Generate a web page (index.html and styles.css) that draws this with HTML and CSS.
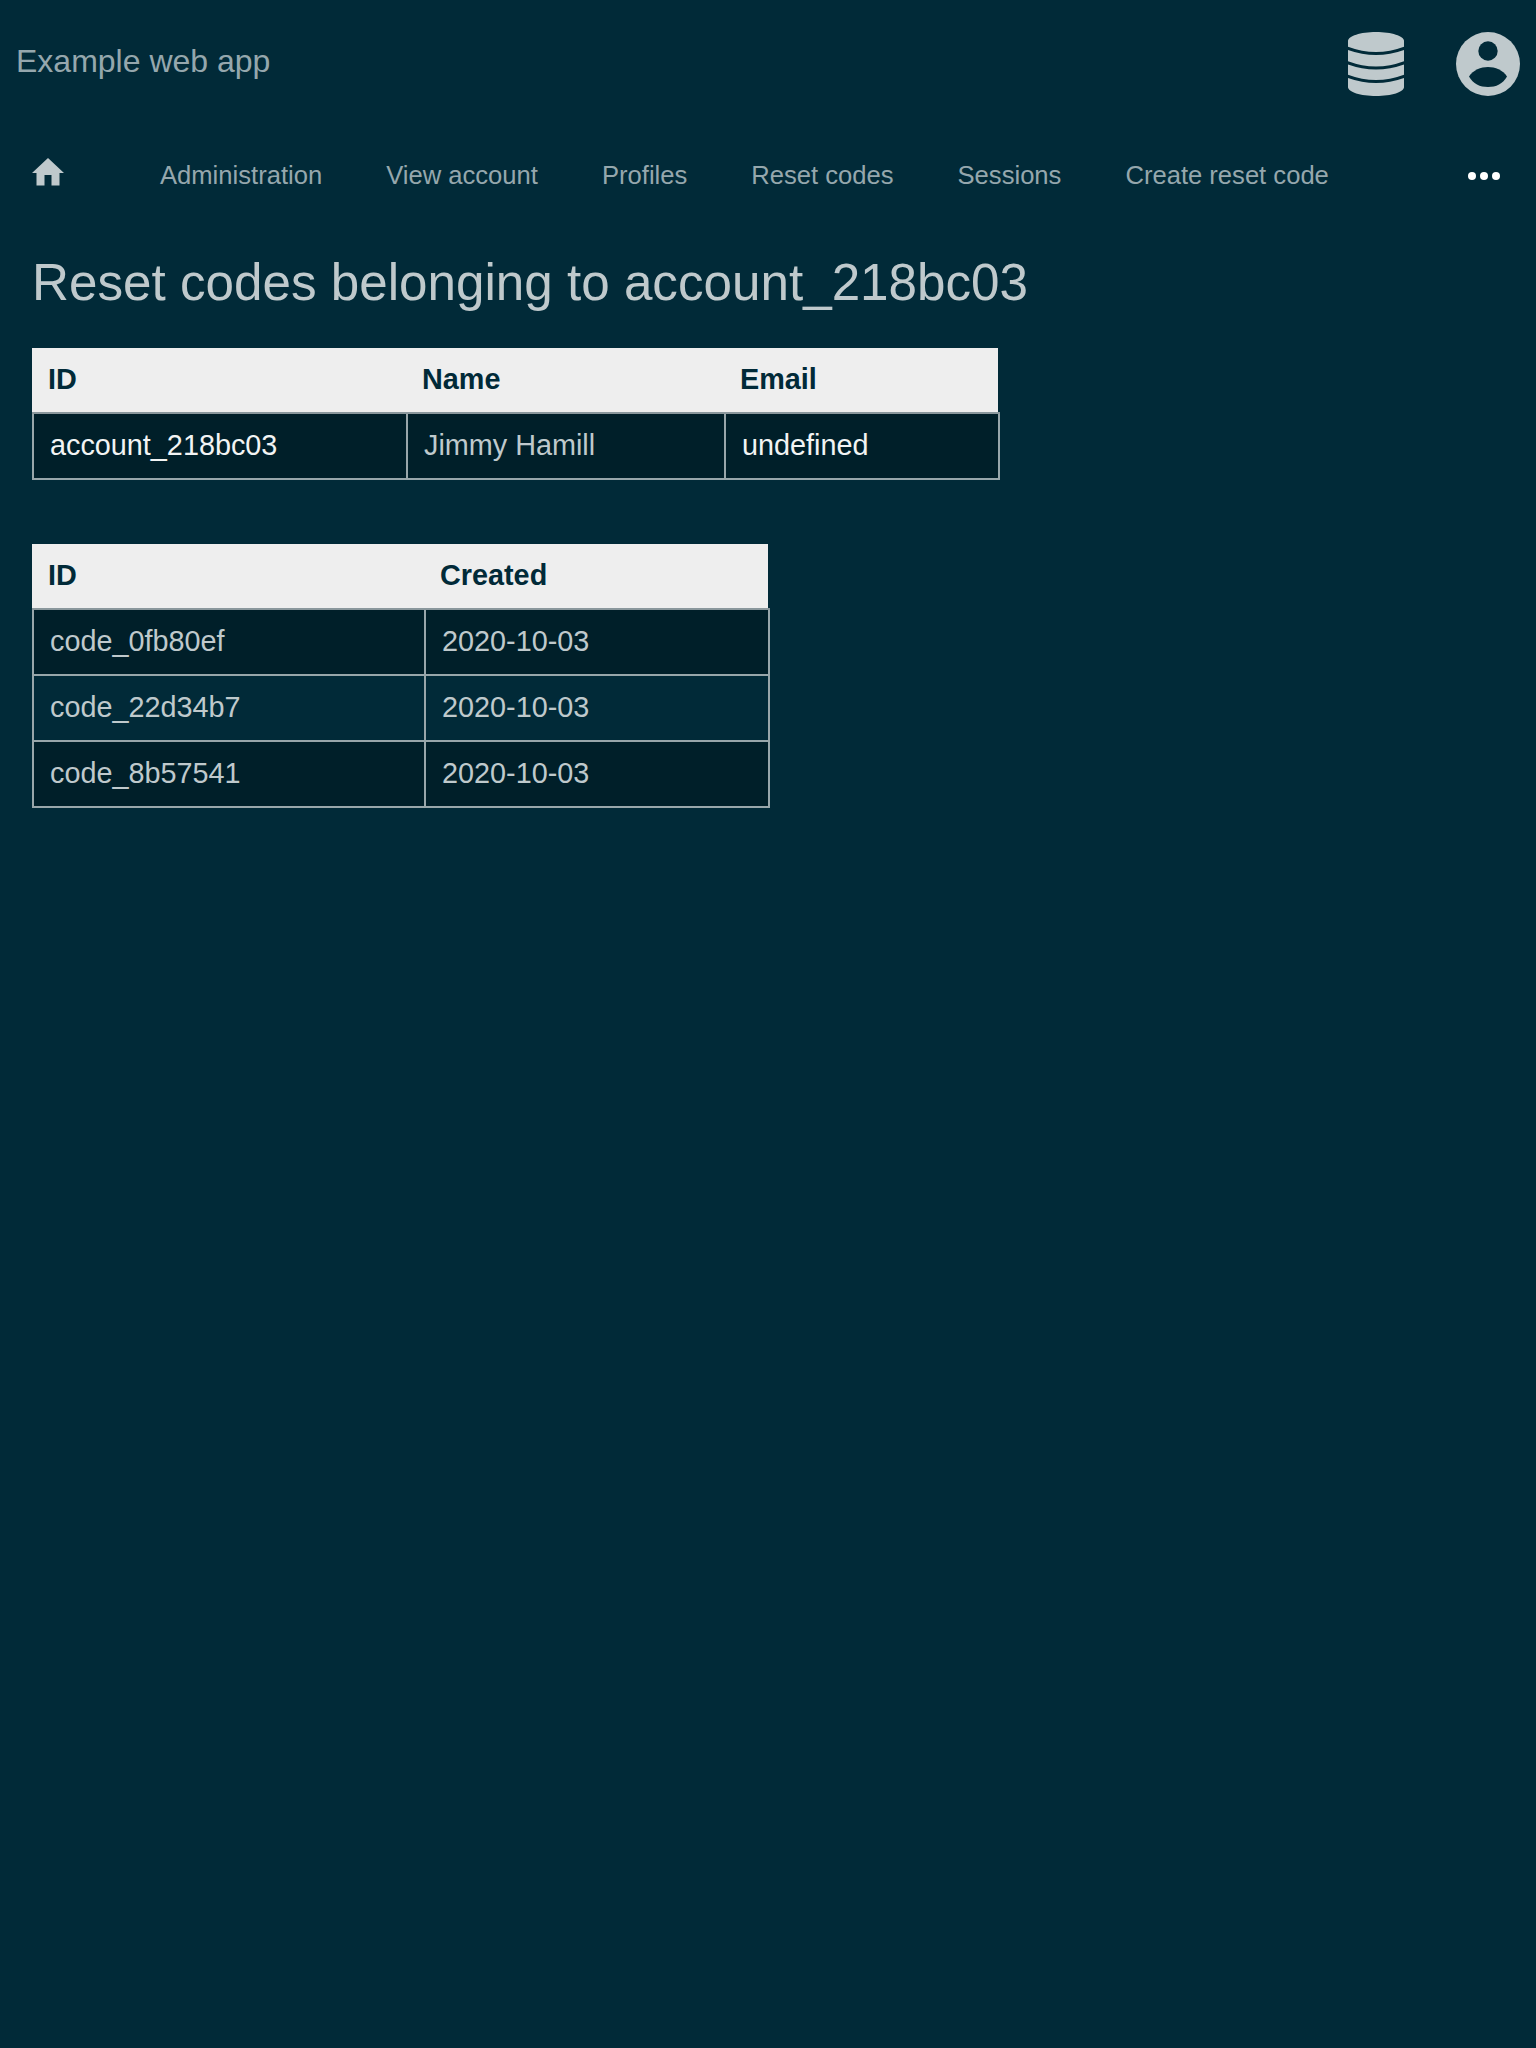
FILE: index.html
```html
<!DOCTYPE html>
<html>

<head>
    <link rel="stylesheet" href="styles.css">
</head>

<body>
    <header class="topbar">
        <div class="app-name">Example web app</div>
        <div class="top-icons">
            <svg class="icon-db" width="56" height="64" viewBox="0 0 56 64">
                <path class="fill" d="M0 9C0 4 12.5 0 28 0S56 4 56 9V55C56 60 43.5 64 28 64S0 60 0 55Z" />
                <path class="cut" d="M-1 16Q28 27 57 16M-1 30.5Q28 41.5 57 30.5M-1 44Q28 55 57 44" />
            </svg>
            <svg class="icon-user" width="64" height="64" viewBox="0 0 64 64">
                <circle class="fill" cx="32" cy="32" r="32" />
                <circle class="hole" cx="32" cy="19" r="9.7" />
                <path class="hole" d="M13 44.5C17 38 25 35 32 35S47 38 51 44.5C47 52 40 55 32 55S17 52 13 44.5Z" />
            </svg>
        </div>
    </header>

    <nav class="menu">
        <a class="home" href="#">
            <svg width="32" height="28" viewBox="0 0 32 28">
                <path class="fill" d="M16 0L32 15H27.500V27.500H19.500V17H12.500V27.500H4.500V15H0Z" />
            </svg>
        </a>
        <a href="#">Administration</a>
        <a href="#">View account</a>
        <a href="#">Profiles</a>
        <a href="#">Reset codes</a>
        <a href="#">Sessions</a>
        <a href="#">Create reset code</a>
        <span class="more"><i></i><i></i><i></i></span>
    </nav>

    <main class="content">
        <h1>Reset codes belonging to account_218bc03</h1>

        <table class="account-table">
            <tr>
                <th class="col-id">ID</th>
                <th class="col-name">Name</th>
                <th class="col-email">Email</th>
            </tr>
            <tr>
                <td class="bright">account_218bc03</td>
                <td>Jimmy Hamill</td>
                <td class="bright">undefined</td>
            </tr>
        </table>

        <table class="codes-table">
            <tr>
                <th class="col-code">ID</th>
                <th class="col-created">Created</th>
            </tr>
            <tr>
                <td>code_0fb80ef</td>
                <td>2020-10-03</td>
            </tr>
            <tr>
                <td>code_22d34b7</td>
                <td>2020-10-03</td>
            </tr>
            <tr>
                <td>code_8b57541</td>
                <td>2020-10-03</td>
            </tr>
        </table>
    </main>
</body>

</html>
```

FILE: styles.css
```css
html,
body {
    height: 100%;
}

body {
    margin: 0;
    min-height: 2048px;
    box-sizing: border-box;
    background-color: #012a38;
    color: #bfc9cc;
    font-family: "Liberation Sans", Arial, sans-serif;
}

svg {
    display: block;
}

.fill {
    fill: #bfc9cc;
}

.hole {
    fill: #012a38;
}

.cut {
    fill: none;
    stroke: #012a38;
    stroke-width: 3;
}

.topbar {
    display: flex;
    justify-content: space-between;
    align-items: flex-start;
    padding: 32px 16px 0 16px;
    height: 96px;
}

.app-name {
    font-size: 32px;
    line-height: 59px;
    color: #95a7ad;
}

.top-icons {
    display: flex;
    gap: 52px;
}

.menu {
    display: flex;
    align-items: center;
    height: 64px;
    margin-top: 16px;
    padding-left: 32px;
    font-size: 25.6px;
}

.menu a {
    color: #95a7ad;
    text-decoration: none;
    margin-right: 64px;
    padding-bottom: 2px;
}

.menu .home {
    margin-right: 96px;
    padding-bottom: 8px;
}

.more {
    display: flex;
    gap: 4px;
    margin-left: auto;
    margin-right: 36px;
}

.more i {
    display: block;
    width: 8px;
    height: 8px;
    border-radius: 50%;
    background-color: #fff;
}

.content {
    padding: 0 32px;
}

h1 {
    margin: 44px 0 34px 0;
    font-size: 51.2px;
    font-weight: normal;
    line-height: 62px;
    color: #bfc9cc;
}

table {
    border-collapse: collapse;
    font-size: 28.8px;
    margin-bottom: 64px;
}

th {
    height: 62px;
    padding: 0 16px 2px 15px;
    background-color: #eee;
    color: #012a38;
    text-align: left;
    border-bottom: 2px solid #8a979c;
}

th:first-child {
    box-shadow: -1px 0 0 #eee;
}

th:last-child {
    box-shadow: inset -1px 0 0 #012a38;
}

td {
    height: 66px;
    box-sizing: border-box;
    padding: 0 16px 2px 16px;
    border: 2px solid #98a6aa;
}

tr:nth-child(even) td {
    background-color: #001f29;
}

.bright {
    color: #f2f4f4;
}

.col-id {
    width: 343px;
}

.col-name {
    width: 287px;
}

.col-email {
    width: 243px;
}

.col-code {
    width: 361px;
}

.col-created {
    width: 313px;
}
```
